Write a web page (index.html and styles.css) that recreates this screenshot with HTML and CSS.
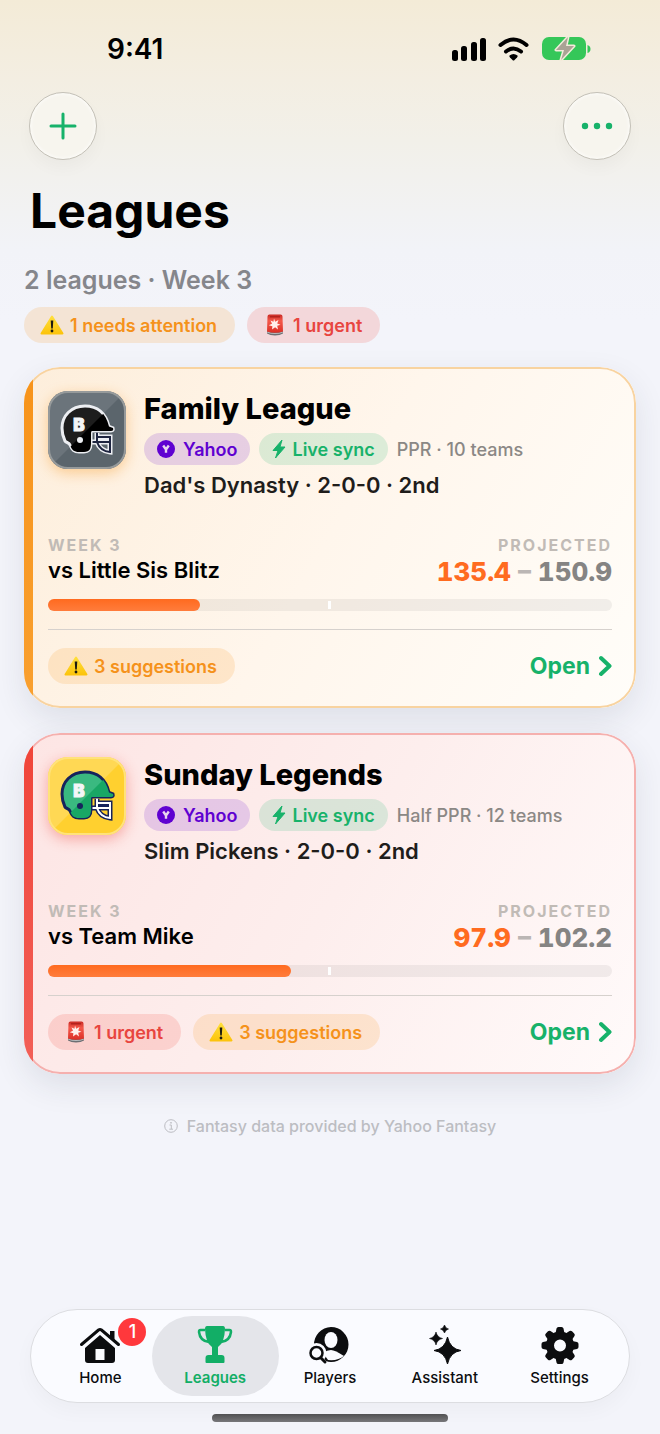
FILE: index.html
```html
<!DOCTYPE html>
<html lang="en">
<head>
  <meta charset="UTF-8" />
  <meta name="viewport" content="width=device-width, initial-scale=1.0" />
  <title>Leagues</title>
  <link rel="stylesheet" href="styles.css">
</head>
<body>
  <!-- Shared icons -->
  <svg class="sprite" aria-hidden="true">
    <defs>
      <linearGradient id="warn-fill" x1="0" y1="0" x2="0" y2="1">
        <stop offset="0" stop-color="#ffdf3c" />
        <stop offset="1" stop-color="#fcc40c" />
      </linearGradient>
      <linearGradient id="siren-fill" x1="0" y1="0" x2="0" y2="1">
        <stop offset="0" stop-color="#c92a24" />
        <stop offset="0.35" stop-color="#f4584a" />
        <stop offset="1" stop-color="#dc2f26" />
      </linearGradient>
      <clipPath id="shell-clip">
        <path d="M44 40H63Q66 40 65 37L61 35.500C58 22 49 15 37 15 23 15 14 25 14 37q0 7 3 13c1 2 4 1 5 4 2 5 4 7 9 7h5c6 0 7-4 7-9V42q0-2 1-2z" />
      </clipPath>
      <symbol id="icon-warning" viewBox="0 0 24 20">
        <path d="M12 1.500 22.500 18.500h-21z" fill="url(#warn-fill)" stroke="url(#warn-fill)" stroke-width="2" stroke-linejoin="round" />
        <path d="M10.700 5.500h2.600l-.5 8h-1.600z" fill="#1c1a10" />
        <circle cx="12" cy="16" r="1.400" fill="#1c1a10" />
      </symbol>
      <symbol id="icon-siren" viewBox="0 0 18 22">
        <path d="M1 17h16v2.500q-3 2-8 2t-8-2z" fill="#6d6f73" />
        <path d="M1 17.500q8 3 16 0v1q-8 3-16 0z" fill="#b9bbbe" />
        <path d="M1.500 2.500Q1.500 .5 3.500 .5h11q2 0 2 2l.5 15q-8 2.500-16 0z" fill="url(#siren-fill)" />
        <path d="M4 2h10v1.500H4z" fill="#b3221d" />
        <path d="m8 4.500 1.200 3.200L12.500 6l-1.300 3.400 3.300 1.300-3.300 1.100.8 3.700-2.900-2.200L6 15.500l.4-3.200-3.700-1 3.300-1.500L4.500 6.500l3 1.200z" fill="#fff0ec" />
      </symbol>
      <symbol id="icon-bolt" viewBox="0 0 14 20">
        <path d="M10 1 1 11.500h5L3.500 19 13 8H8z" fill="currentColor" stroke="currentColor" stroke-width="1" stroke-linejoin="round" />
      </symbol>
      <symbol id="icon-yahoo" viewBox="0 0 18 18">
        <circle cx="9" cy="9" r="9" fill="#5f01d1" />
        <path d="m6.200 5.500 2.800 4v3.200M11.800 5.500 9 9.500" fill="none" stroke="#e8d4ee" stroke-width="2.400" />
      </symbol>
      <symbol id="icon-chevron" viewBox="0 0 14 24">
        <path d="m3 4 8.500 8L3 20" fill="none" stroke="currentColor" stroke-width="4" stroke-linecap="round" stroke-linejoin="round" />
      </symbol>
      <symbol id="icon-helmet" viewBox="0 0 78 78">
        <path class="tile-shine" d="M0 0H78L0 78z" />
        <path class="mask-outer" d="M49 42V51Q52 60 62 61V46H49M44 51H61" />
        <path class="mask-inner" d="M49 41V51Q52 60 62 61V46H49M43 51H61" />
        <path class="shell" d="M44 40H63Q66 40 65 37L61 35.500C58 22 49 15 37 15 23 15 14 25 14 37q0 7 3 13c1 2 4 1 5 4 2 5 4 7 9 7h5c6 0 7-4 7-9V42q0-2 1-2z" />
        <path class="shell-shade" clip-path="url(#shell-clip)" d="M78 0V78H0z" />
        <circle class="ear" cx="32" cy="49" r="3" />
        <text class="letter" x="31" y="40" text-anchor="middle">B</text>
      </symbol>
    </defs>
  </svg>

  <!-- Status bar -->
  <div class="status-bar">
    <span class="time">9:41</span>
    <div class="status-icons">
      <svg width="34" height="24" viewBox="0 0 34 24">
        <rect x="0" y="13" width="6" height="11" rx="2.500" />
        <rect x="9" y="9" width="6" height="15" rx="2.500" />
        <rect x="19" y="5" width="6" height="19" rx="2.500" />
        <rect x="28" y="1" width="6" height="23" rx="2.500" />
      </svg>
      <svg width="32" height="24" viewBox="0 0 32 24">
        <path d="M2.500 8q13-11 26 0M8 14.500q7.500-6 15 0" fill="none" stroke="#000" stroke-width="4" stroke-linecap="round" />
        <path d="M11.500 18.500q4-3 8 0 .5 1-.5 2L16.500 23q-1 1-2 0L12 20.500q-1-1-.5-2z" />
      </svg>
      <svg width="50" height="24" viewBox="0 0 50 24">
        <rect x="0" y="0" width="44" height="23" rx="7" fill="#35c759" />
        <path d="M45.500 8q3 1 3 4t-3 4z" fill="#35c759" />
        <path d="M26 0 14 13h8l-3 10L32 9h-8z" fill="#aaa395" stroke="#f3ecdb" stroke-width="3" stroke-linejoin="round" paint-order="stroke" />
      </svg>
    </div>
  </div>

  <header class="toolbar">
    <button class="round-btn" type="button" aria-label="Add league">
      <svg width="28" height="28" viewBox="0 0 28 28"><path d="M14 2v24M2 14h24" fill="none" stroke="currentColor" stroke-width="3" stroke-linecap="round" /></svg>
    </button>
    <button class="round-btn" type="button" aria-label="More">
      <svg width="32" height="8" viewBox="0 0 32 8"><circle cx="4" cy="4" r="3.200" /><circle cx="16" cy="4" r="3.200" /><circle cx="28" cy="4" r="3.200" /></svg>
    </button>
  </header>

  <main>
    <h1>Leagues</h1>
    <p class="summary">2 leagues · Week 3</p>
    <div class="badges">
      <span class="badge badge-warn"><svg class="emoji"><use href="#icon-warning" /></svg>1 needs attention</span>
      <span class="badge badge-urgent"><svg class="emoji"><use href="#icon-siren" /></svg>1 urgent</span>
    </div>

    <!-- League cards -->
    <article class="card card-warn">
      <div class="card-head">
        <svg class="logo logo-gray"><use href="#icon-helmet" /></svg>
        <div class="info">
          <h2>Family League</h2>
          <div class="tags">
            <span class="tag tag-yahoo"><svg width="18" height="18"><use href="#icon-yahoo" /></svg>Yahoo</span>
            <span class="tag tag-live"><svg width="14" height="20"><use href="#icon-bolt" /></svg>Live sync</span>
            <span class="format">PPR · 10 teams</span>
          </div>
          <p class="team">Dad's Dynasty · 2-0-0 · 2nd</p>
        </div>
      </div>
      <div class="matchup">
        <div>
          <div class="label">Week 3</div>
          <div class="opponent">vs Little Sis Blitz</div>
        </div>
        <div class="projected">
          <div class="label">Projected</div>
          <div class="score"><b>135.4</b> <i>–</i> 150.9</div>
        </div>
      </div>
      <div class="bar"><div class="bar-fill" style="width: 27%"></div></div>
      <div class="card-foot">
        <span class="badge badge-warn"><svg class="emoji"><use href="#icon-warning" /></svg>3 suggestions</span>
        <a class="open" href="#">Open<svg width="14" height="24"><use href="#icon-chevron" /></svg></a>
      </div>
    </article>

    <article class="card card-urgent">
      <div class="card-head">
        <svg class="logo logo-yellow"><use href="#icon-helmet" /></svg>
        <div class="info">
          <h2>Sunday Legends</h2>
          <div class="tags">
            <span class="tag tag-yahoo"><svg width="18" height="18"><use href="#icon-yahoo" /></svg>Yahoo</span>
            <span class="tag tag-live"><svg width="14" height="20"><use href="#icon-bolt" /></svg>Live sync</span>
            <span class="format">Half PPR · 12 teams</span>
          </div>
          <p class="team">Slim Pickens · 2-0-0 · 2nd</p>
        </div>
      </div>
      <div class="matchup">
        <div>
          <div class="label">Week 3</div>
          <div class="opponent">vs Team Mike</div>
        </div>
        <div class="projected">
          <div class="label">Projected</div>
          <div class="score"><b>97.9</b> <i>–</i> 102.2</div>
        </div>
      </div>
      <div class="bar"><div class="bar-fill" style="width: 43%"></div></div>
      <div class="card-foot">
        <span class="badge badge-urgent"><svg class="emoji"><use href="#icon-siren" /></svg>1 urgent</span>
        <span class="badge badge-warn"><svg class="emoji"><use href="#icon-warning" /></svg>3 suggestions</span>
        <a class="open" href="#">Open<svg width="14" height="24"><use href="#icon-chevron" /></svg></a>
      </div>
    </article>

    <p class="note">
      <svg class="info-icon" width="14" height="14" viewBox="0 0 14 14"><circle cx="7" cy="7" r="6.300" /><path d="M5.500 6H7.300v4M5.300 10.200h3.700" /><circle cx="7" cy="3.800" r=".5" /></svg>
      Fantasy data provided by Yahoo Fantasy
    </p>
  </main>

  <nav class="tab-bar">
    <a class="tab" href="#">
      <svg width="42" height="40" viewBox="0 0 42 40">
        <path d="M31 6h4.500v9L31 11z" />
        <path d="M2.500 19.500 19.500 5q1.500-1 3 0l17 14.500" fill="none" stroke="currentColor" stroke-width="3" stroke-linecap="round" />
        <path d="M21 10 6 23v12q0 3 3 3h24q3 0 3-3V23zM16.500 24h9v11h-9z" fill-rule="evenodd" />
      </svg>
      Home
      <span class="count">1</span>
    </a>
    <a class="tab active" href="#">
      <svg width="42" height="40" viewBox="0 0 42 40">
        <path d="M13 1h16q2 0 2 3-.5 14-7 18v8h3.500q3 0 3 3v4q0 1-1 1h-17q-1 0-1-1v-4q0-3 3-3H18v-8q-6.500-4-7-18 0-3 2-3z" />
        <path d="M11 5H6.500Q5 5 5 7q1 9 10 10M31 5h4.500Q37 5 37 7q-1 9-10 10" fill="none" stroke="currentColor" stroke-width="2.500" />
      </svg>
      Leagues
    </a>
    <a class="tab" href="#">
      <svg width="42" height="40" viewBox="0 0 42 40">
        <path d="M22 2a17.500 17.500 0 0 1 0 35q-3 0-5-1l-3-4q-2-5-3-8t-6-4A17.500 17.500 0 0 1 22 2z" />
        <ellipse cx="22" cy="15" rx="6.500" ry="8" fill="#fafbff" />
        <path d="M14 28q4-3 8-3t13 6q-6 5-16 4z" fill="#fafbff" />
        <circle cx="7.500" cy="28" r="7" fill="none" stroke="#fafbff" stroke-width="6" />
        <circle cx="7.500" cy="28" r="6" fill="#fafbff" stroke="currentColor" stroke-width="2.500" />
        <path d="m12 33 4 4" fill="none" stroke="currentColor" stroke-width="3" stroke-linecap="round" />
      </svg>
      Players
    </a>
    <a class="tab" href="#">
      <svg width="42" height="40" viewBox="0 0 42 40">
        <path d="M23.500 12q2.500 12 13.500 13.500-11 1.500-13.500 13.500Q21 27 10 25.500 21 24 23.500 12z" stroke="currentColor" stroke-linejoin="round" />
        <path d="M12 7q1.200 5.300 6.500 6.500-5.300 1.200-6.500 6.500-1.200-5.300-6.500-6.500Q10.800 12.300 12 7zM20.500 0q.8 3.200 4 4-3.200.8-4 4-.8-3.200-4-4 3.200-.8 4-4z" stroke="currentColor" stroke-width=".6" />
      </svg>
      Assistant
    </a>
    <a class="tab" href="#">
      <svg width="42" height="40" viewBox="-21 -20.500 42 40">
        <circle r="10" fill="none" stroke="currentColor" stroke-width="8" />
        <g id="teeth">
          <path id="tooth" d="M-4.500-12-3.500-17q.3-1.500 2-1.500H1.500q1.700 0 2 1.500l1 5z" />
          <use href="#tooth" transform="rotate(45)" />
          <use href="#tooth" transform="rotate(90)" />
          <use href="#tooth" transform="rotate(135)" />
        </g>
        <use href="#teeth" transform="rotate(180)" />
      </svg>
      Settings
    </a>
  </nav>
  <div class="home-indicator"></div>
</body>
</html>
```
FILE: styles.css
```css
* { box-sizing: border-box; }
body {
  font-family: Inter, "Liberation Sans", sans-serif;
  background: linear-gradient(#f3ebd7 0, #f3eee2 80px, #f2f0e9 140px, #f2f3f8 250px, #f3f4fa 320px);
  color: #000;
  margin: 0;
  min-height: 100vh;
  display: flex;
  flex-direction: column;
}
h1, h2, p { margin: 0; }
a { text-decoration: none; }
svg { flex: none; fill: currentColor; }
.sprite {
  position: absolute;
  width: 0;
  height: 0;
}

/* Status bar */
.status-bar {
  display: flex;
  justify-content: space-between;
  align-items: center;
  padding: 31px 68px 0 107px;
}
.time {
  font-size: 28px;
  line-height: 36px;
  font-weight: 600;
}
.status-icons {
  display: flex;
  gap: 12px;
}

.toolbar {
  display: flex;
  justify-content: space-between;
  padding: 25px 29px 0;
}
.round-btn {
  width: 68px;
  height: 68px;
  padding: 0;
  display: flex;
  align-items: center;
  justify-content: center;
  border: 1px solid #c4c1b8;
  border-radius: 50%;
  background: #f7f5ee;
  box-shadow: 0 8px 16px rgba(0, 0, 0, 0.03), inset 0 0 4px #fff;
  color: #17b26a;
}

main {
  padding: 21px 24px 0;
}
h1 {
  font-size: 48px;
  line-height: 60px;
  font-weight: 700;
  padding-left: 6px;
}
.summary {
  margin-top: 23px;
  font-size: 25px;
  line-height: 32px;
  font-weight: 600;
  color: #85868b;
}
.badges {
  display: flex;
  gap: 12px;
  margin-top: 11px;
}
.badge {
  display: flex;
  align-items: center;
  gap: 6px;
  height: 36px;
  padding: 0 18px 0 16px;
  border-radius: 18px;
  font-size: 18px;
  font-weight: 600;
}
.badge-warn {
  background: rgba(247, 147, 26, 0.16);
  color: #f5921b;
}
.badge-urgent {
  background: rgba(240, 68, 56, 0.16);
  color: #e8453f;
}
.emoji {
  width: 24px;
  height: 22px;
}

/* Cards */
.card {
  position: relative;
  overflow: hidden;
  margin-top: 24px;
  padding: 24px;
  border-radius: 36px;
  box-shadow: 0 12px 32px rgba(40, 50, 65, 0.1);
}
.card + .card { margin-top: 25px; }
.card::before {
  content: "";
  position: absolute;
  z-index: 1;
  top: 0;
  bottom: 0;
  left: 0;
  width: 9px;
}
.card::after {
  content: "";
  position: absolute;
  inset: 0;
  border: 2px solid;
  border-radius: 36px;
  pointer-events: none;
}
.card-warn { background: linear-gradient(120deg, #fdeedb, #fff6ec 50%, #fffdf9); }
.card-warn::before { background: linear-gradient(#f7931a, #f9a02f); }
.card-warn::after { border-color: #f8d3a0; }
.card-urgent { background: linear-gradient(120deg, #fde5e4, #fdeeed 50%, #fffafa); }
.card-urgent::before { background: linear-gradient(#f04438, #f26058); }
.card-urgent::after { border-color: #f5b0ae; }
.card-head {
  display: flex;
  gap: 18px;
}
.logo {
  width: 78px;
  height: 78px;
  border-radius: 20px;
  outline: 2px solid;
  outline-offset: -2px;
}
.logo-gray {
  background: #5b656c;
  outline-color: #969a9b;
  box-shadow: 0 4px 14px rgba(247, 147, 26, 0.4);
  --shell: #1d1d1d;
  --shade: #000;
  --line: #eceef2;
  --mask: #1e2540;
  --ear: #eceef2;
  --shine: rgba(255, 255, 255, 0.1);
}
.logo-yellow {
  background: #ffd02f;
  outline-color: #ffe27a;
  box-shadow: 0 4px 14px rgba(240, 68, 56, 0.4);
  --shell: #3ab980;
  --shade: #19a765;
  --line: #17235c;
  --mask: #fff;
  --ear: #17235c;
  --shine: rgba(255, 255, 255, 0.18);
}
.tile-shine { fill: var(--shine); }
.shell { fill: var(--shell); stroke: var(--line); stroke-width: 3; }
.shell-shade { fill: var(--shade); }
.ear { fill: var(--ear); }
.mask-outer { fill: none; stroke: var(--line); stroke-width: 5; }
.mask-inner { fill: none; stroke: var(--mask); stroke-width: 2; }
.letter {
  font-size: 17px;
  font-weight: 900;
  fill: #f4f6f8;
  stroke: #f4f6f8;
}
h2 {
  font-size: 29px;
  line-height: 36px;
  font-weight: 800;
}
.tags {
  display: flex;
  align-items: center;
  gap: 9px;
  margin-top: 6px;
}
.tag {
  display: flex;
  align-items: center;
  height: 32px;
  padding: 0 13px;
  border-radius: 16px;
  font-size: 18px;
  font-weight: 600;
}
.tag-yahoo {
  gap: 8px;
  background: rgba(95, 1, 209, 0.15);
  color: #5f01d1;
}
.tag-live {
  gap: 6px;
  background: rgba(23, 178, 106, 0.15);
  color: #17b26a;
}
.format {
  font-size: 18px;
  font-weight: 500;
  color: #8b8885;
}
.team {
  margin-top: 6px;
  font-size: 22px;
  line-height: 28px;
  font-weight: 600;
  color: #1f1d1b;
}
.matchup {
  display: flex;
  justify-content: space-between;
  margin-top: 36px;
}
.label {
  font-size: 16px;
  line-height: 20px;
  font-weight: 700;
  letter-spacing: 2px;
  text-transform: uppercase;
  color: #c1bbb6;
}
.opponent {
  font-size: 22px;
  line-height: 30px;
  font-weight: 600;
}
.projected { text-align: right; }
.score {
  font-size: 26px;
  line-height: 34px;
  font-weight: 800;
  font-variant-numeric: tabular-nums;
  color: #858483;
}
.score b { font-weight: 800; color: #ff6b1f; }
.score i { font-style: normal; color: #bbb6b4; }
.bar {
  position: relative;
  height: 12px;
  margin-top: 10px;
  border-radius: 6px;
  background: rgba(120, 120, 120, 0.1);
}
.bar::after {
  content: "";
  position: absolute;
  top: 2px;
  left: 50%;
  width: 3px;
  height: 8px;
  margin-left: -2px;
  background: #fff;
}
.bar-fill {
  height: 100%;
  border-radius: 6px;
  background: linear-gradient(#ff6a1f, #ff7c3c);
}
.card-foot {
  display: flex;
  align-items: center;
  gap: 12px;
  margin-top: 18px;
  padding-top: 18px;
  border-top: 1px solid #d6d1cd;
}
.open {
  display: flex;
  align-items: center;
  gap: 8px;
  margin-left: auto;
  font-size: 23px;
  font-weight: 700;
  color: #17b26a;
}

.note {
  display: flex;
  align-items: center;
  justify-content: center;
  gap: 9px;
  margin-top: 40px;
  font-size: 16px;
  line-height: 24px;
  font-weight: 500;
  color: #bcbdc2;
}
.info-icon {
  fill: none;
  stroke: currentColor;
}

/* Bottom tabs */
.tab-bar {
  display: flex;
  height: 94px;
  margin: auto 30px 0;
  padding: 6px 12px;
  border: 1px solid #dcdde1;
  border-radius: 47px;
  background: #fafbff;
  box-shadow: 0 8px 20px rgba(0, 0, 0, 0.03);
}
.tab {
  position: relative;
  flex: 1;
  display: flex;
  flex-direction: column;
  align-items: center;
  margin: 0 -6px;
  padding-top: 9px;
  border-radius: 40px;
  font-size: 15px;
  line-height: 26px;
  font-weight: 500;
  color: #0c0d0f;
}
.tab.active {
  background: #e4e5ea;
  color: #12ae66;
  font-weight: 600;
}
.count {
  position: absolute;
  top: 2px;
  left: 50%;
  width: 28px;
  height: 28px;
  margin-left: 18px;
  border-radius: 50%;
  background: #ff383c;
  color: #fff;
  font-size: 18px;
  line-height: 28px;
  text-align: center;
}
.home-indicator {
  width: 236px;
  height: 8px;
  margin: 11px auto 12px;
  border-radius: 4px;
  background: linear-gradient(#505052, #77777a);
}
```
